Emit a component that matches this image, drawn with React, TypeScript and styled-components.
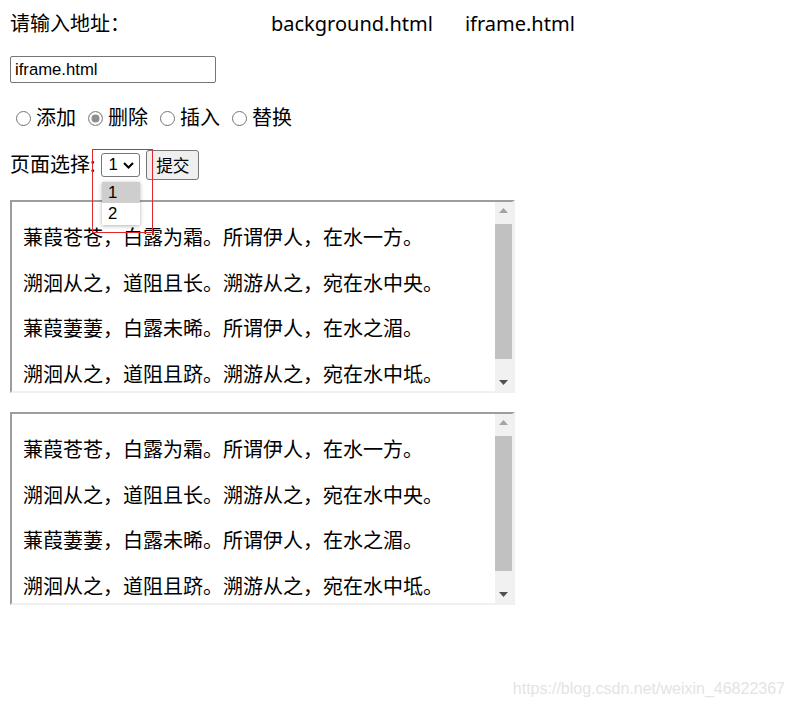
import styled, { createGlobalStyle } from "styled-components";

const GlobalStyle = createGlobalStyle`
  html, body {
    margin: 0;
    padding: 0;
    background: #fff;
  }
  body {
    font-family: "Noto Sans", "Noto Sans CJK SC", sans-serif;
    color: #000;
  }
`;

const Page = styled.div`
  position: relative;
  min-height: 708px;
  padding: 10px;
  box-sizing: border-box;
`;

const AddressLine = styled.div`
  display: flex;
  align-items: center;
  height: 28px;
  font-size: 20px;
  line-height: 28px;
  white-space: nowrap;
`;

const PageLink = styled.span<{ $gap: number }>`
  margin-left: ${({ $gap }) => $gap}px;
`;

const AddressInput = styled.input`
  display: block;
  margin: 18px 0 0;
  width: 206px;
  height: 27px;
  box-sizing: border-box;
  padding: 0 4px;
  border: 1px solid #767676;
  border-radius: 2px;
  font-family: "Liberation Sans", Arial, sans-serif;
  font-size: 16.7px;
  color: #000;
  outline: none;
`;

const RadioRow = styled.div`
  display: flex;
  align-items: center;
  gap: 6px;
  margin-top: 21px;
  height: 28px;
  font-size: 20px;
  line-height: 28px;
`;

const Choice = styled.label`
  display: inline-flex;
  align-items: center;
`;

const RadioDot = styled.span<{ $checked?: boolean }>`
  display: inline-block;
  width: 15px;
  height: 15px;
  box-sizing: border-box;
  margin: 0 5px 0 6px;
  border-radius: 50%;
  border: 1px solid ${({ $checked }) => ($checked ? "#8f8f8f" : "#767676")};
  background: ${({ $checked }) => ($checked ? "#8f8f8f" : "#fff")};
  box-shadow: ${({ $checked }) => ($checked ? "inset 0 0 0 2.5px #fff" : "none")};
`;

const SelectRow = styled.div`
  position: relative;
  display: flex;
  align-items: center;
  margin-top: 18px;
  height: 30px;
  font-size: 20px;
  line-height: 28px;
`;

const FakeSelect = styled.div`
  display: flex;
  align-items: center;
  justify-content: space-between;
  margin-left: 6px;
  width: 39px;
  height: 24px;
  box-sizing: border-box;
  padding: 0 5px 0 6px;
  border: 1px solid #767676;
  border-radius: 3px;
  font-family: "Liberation Sans", Arial, sans-serif;
  font-size: 16.7px;
  line-height: 22px;
`;

const SubmitButton = styled.button`
  margin-left: 6px;
  width: 53px;
  height: 30px;
  padding: 0;
  border: 1px solid #767676;
  border-radius: 3px;
  background: #efefef;
  font-family: "Noto Sans CJK SC", sans-serif;
  font-size: 16.7px;
  color: #000;
`;

const Popup = styled.div`
  position: absolute;
  top: 32px;
  left: 92px;
  width: 38px;
  padding-bottom: 1px;
  background: #fff;
  box-shadow: 0 1px 4px rgba(0, 0, 0, 0.3);
  font-family: "Liberation Sans", Arial, sans-serif;
  font-size: 16.7px;
`;

const PopupOption = styled.div<{ $active?: boolean }>`
  height: 21px;
  line-height: 21px;
  padding-left: 6px;
  background: ${({ $active }) => ($active ? "#cecece" : "#fff")};
`;

const Marker = styled.div`
  position: absolute;
  top: -1px;
  left: 82px;
  width: 61px;
  height: 84px;
  box-sizing: border-box;
  border: 1px solid #e3262b;
  pointer-events: none;
`;

const Frame = styled.div<{ $gap: number }>`
  display: flex;
  margin-top: ${({ $gap }) => $gap}px;
  width: 505px;
  height: 193px;
  box-sizing: border-box;
  border-style: solid;
  border-width: 2px 3px 2px 2px;
  border-color: #9d9d9d #f0f0f0 #f0f0f0 #9d9d9d;
`;

const FrameContent = styled.div`
  flex: 1;
  overflow: hidden;
  padding: 22px 0 0 11px;
  font-family: "Noto Sans CJK SC", sans-serif;
  font-size: 20px;
  line-height: 26px;
`;

const Verse = styled.p`
  margin: 0 0 19.5px;
  white-space: nowrap;
`;

const Scrollbar = styled.div`
  display: flex;
  flex-direction: column;
  width: 17px;
  background: #f1f1f1;
`;

const ArrowButton = styled.div`
  display: flex;
  align-items: center;
  justify-content: center;
  height: 17px;
`;

const Track = styled.div`
  flex: 1;
  padding-top: 5px;
`;

const Thumb = styled.div`
  height: 135px;
  background: #c1c1c1;
`;

const Watermark = styled.div`
  position: absolute;
  right: 10px;
  bottom: 10px;
  font-family: "Liberation Sans", Arial, sans-serif;
  font-size: 16px;
  line-height: 18px;
  color: #e4e4e4;
`;

const verses = [
  "蒹葭苍苍，白露为霜。所谓伊人，在水一方。",
  "溯洄从之，道阻且长。溯游从之，宛在水中央。",
  "蒹葭萋萋，白露未晞。所谓伊人，在水之湄。",
  "溯洄从之，道阻且跻。溯游从之，宛在水中坻。",
];

const Chevron = () => (
  <svg width="11" height="7" viewBox="0 0 11 7">
    <polyline points="1,1 5.5,5.5 10,1" fill="none" stroke="#000" strokeWidth="2" />
  </svg>
);

const Triangle = ({ up, color }: { up?: boolean; color: string }) => (
  <svg width="9" height="5" viewBox="0 0 9 5">
    <polygon points={up ? "0,5 9,5 4.5,0" : "0,0 9,0 4.5,5"} fill={color} />
  </svg>
);

const PoemFrame = ({ gap }: { gap: number }) => (
  <Frame $gap={gap}>
    <FrameContent>
      {verses.map((v) => (
        <Verse key={v}>{v}</Verse>
      ))}
    </FrameContent>
    <Scrollbar>
      <ArrowButton>
        <Triangle up color="#a3a3a3" />
      </ArrowButton>
      <Track>
        <Thumb />
      </Track>
      <ArrowButton>
        <Triangle color="#505050" />
      </ArrowButton>
    </Scrollbar>
  </Frame>
);

export default function App() {
  const options = [
    { label: "添加", checked: false },
    { label: "删除", checked: true },
    { label: "插入", checked: false },
    { label: "替换", checked: false },
  ];

  return (
    <Page>
      <GlobalStyle />
      <AddressLine>
        请输入地址：
        <PageLink $gap={141}>background.html</PageLink>
        <PageLink $gap={32}>iframe.html</PageLink>
      </AddressLine>
      <AddressInput defaultValue="iframe.html" readOnly />
      <RadioRow>
        {options.map((o) => (
          <Choice key={o.label}>
            <RadioDot $checked={o.checked} />
            {o.label}
          </Choice>
        ))}
      </RadioRow>
      <SelectRow>
        页面选择:
        <FakeSelect>
          1
          <Chevron />
        </FakeSelect>
        <SubmitButton>提交</SubmitButton>
        <Popup>
          <PopupOption $active>1</PopupOption>
          <PopupOption>2</PopupOption>
        </Popup>
        <Marker />
      </SelectRow>
      <PoemFrame gap={20} />
      <PoemFrame gap={19} />
      <Watermark>https://blog.csdn.net/weixin_46822367</Watermark>
    </Page>
  );
}
